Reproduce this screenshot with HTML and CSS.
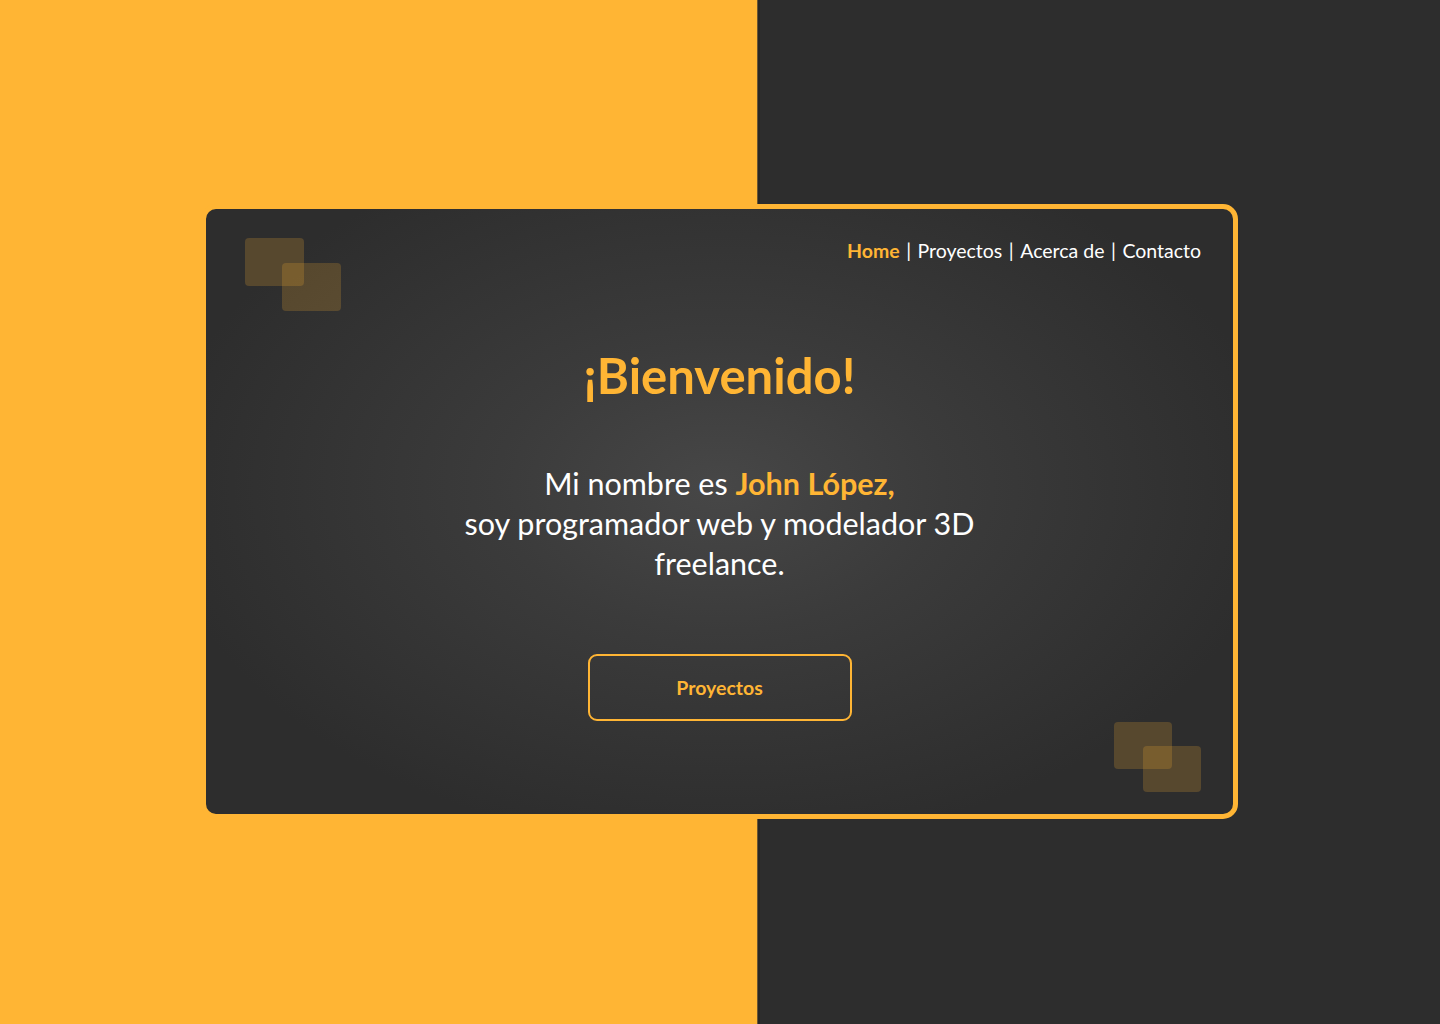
FILE: index.html
```html
<!DOCTYPE html>
<html lang="es">
<head>
<meta charset="utf-8">
<title>John López</title>
<link rel="stylesheet" href="styles.css">
</head>
<body>
<main class="card">
  <span class="deco deco-tl"><i class="sq sq-a"></i><i class="sq sq-b"></i></span>
  <span class="deco deco-br"><i class="sq sq-a"></i><i class="sq sq-b"></i></span>
  <nav class="nav">
    <a class="nav-link active" href="#">Home</a>
    <span class="sep">|</span>
    <a class="nav-link" href="#">Proyectos</a>
    <span class="sep">|</span>
    <a class="nav-link" href="#">Acerca de</a>
    <span class="sep">|</span>
    <a class="nav-link" href="#">Contacto</a>
  </nav>
  <section class="hero">
    <h1 class="title">¡Bienvenido!</h1>
    <p class="intro">Mi nombre es <strong class="name">John López,</strong><br>soy programador web y modelador 3D freelance.</p>
    <a class="btn" href="#">Proyectos</a>
  </section>
</main>
</body>
</html>
```
FILE: styles.css
```css
* { box-sizing: border-box; }
html, body { margin: 0; padding: 0; }
body {
  width: 1440px;
  height: 1024px;
  padding: 204px 0 0 201px;
  font-family: "Lato", "Open Sans", sans-serif;
  background: linear-gradient(to right,
    #ffb534 0, #ffb534 757px,
    #6a5531 757px, #6a5531 758px,
    #262626 758px, #262626 760px,
    #2d2d2d 760px, #2d2d2d 100%);
}
.card {
  position: relative;
  width: 1037px;
  height: 615px;
  border: 5px solid #ffb534;
  border-radius: 15px;
  background: radial-gradient(ellipse 560px 360px at 50% 46%, #474747 0%, #3b3b3b 40%, #2d2d2d 100%);
  display: flex;
  flex-direction: column;
  color: #fff;
}
.deco { position: absolute; width: 96px; height: 72px; }
.deco-tl { left: 39px; top: 29px; }
.deco-br { right: 32px; top: 513px; width: 87px; }
.sq {
  position: absolute;
  width: 59px;
  height: 48px;
  border-radius: 4px;
  background: rgba(255, 181, 52, 0.2);
}
.sq-a { left: 0; top: 0; }
.sq-b { left: 37px; top: 25px; }
.deco-br .sq-a { width: 58px; height: 47px; }
.deco-br .sq-b { left: 29px; top: 24px; width: 58px; height: 46px; }
.nav {
  display: flex;
  justify-content: flex-end;
  align-items: center;
  gap: 6.5px;
  padding: 30px 32px 0 0;
  font-size: 19.5px;
  line-height: 24px;
}
.nav-link { color: #fff; text-decoration: none; }
.nav-link.active { color: #ffb534; font-weight: 700; }
.sep { color: #ffffff; font-weight: 400; }
.hero {
  display: flex;
  flex-direction: column;
  align-items: center;
  text-align: center;
}
.title {
  margin: 84px 0 0;
  font-size: 49px;
  line-height: 56px;
  font-weight: 700;
  color: #ffb534;
}
.intro {
  margin: 60px 0 0;
  width: 540px;
  font-size: 30.5px;
  line-height: 40px;
  font-weight: 400;
  color: #fff;
}
.name { color: #ffb534; font-weight: 700; }
.btn {
  margin-top: 71px;
  width: 264px;
  height: 67px;
  border: 2px solid #ffb534;
  border-radius: 9px;
  display: flex;
  align-items: center;
  justify-content: center;
  color: #ffb534;
  font-size: 19.5px;
  font-weight: 700;
  text-decoration: none;
}
```
